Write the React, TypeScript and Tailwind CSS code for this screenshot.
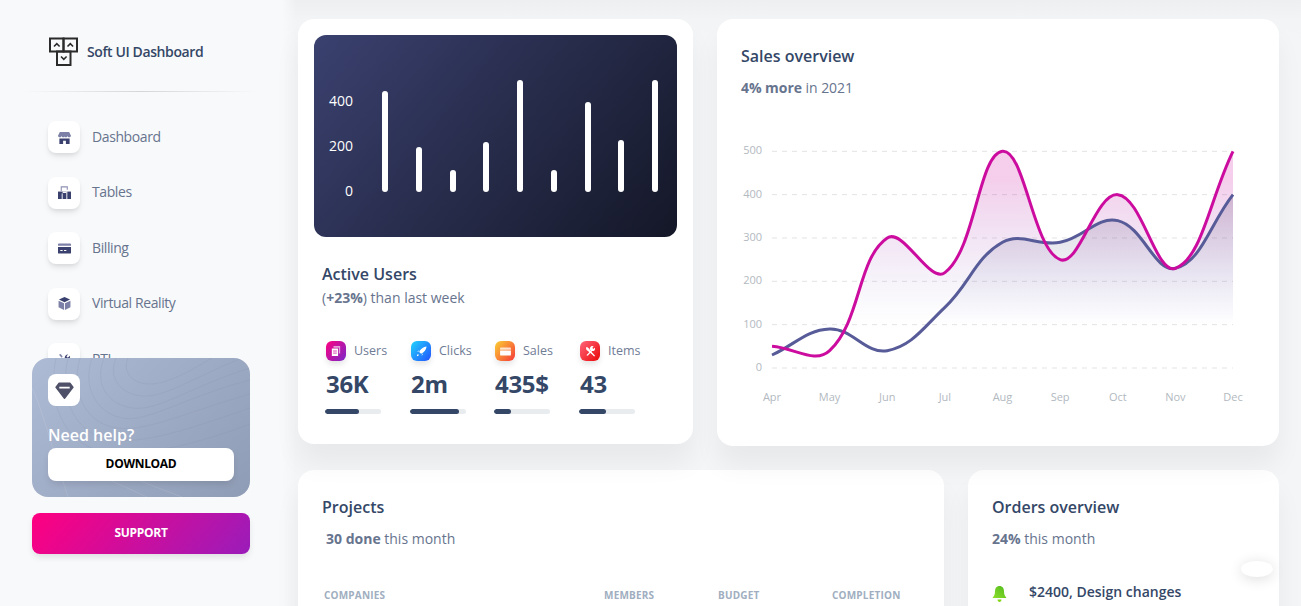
const F = "font-['Open_Sans',sans-serif]";

const xs = Array.from({ length: 9 }, (_, i) => 772 + i * 57.625);
const Y0 = 368;
const yFor = (v: number) => Y0 - v * 0.4334;
const months = ["Apr", "May", "Jun", "Jul", "Aug", "Sep", "Oct", "Nov", "Dec"];
const pink = [50, 40, 300, 220, 500, 250, 400, 230, 500];
const blue = [30, 90, 40, 140, 290, 290, 340, 230, 400];

function spline(vals: number[]) {
  const p = vals.map((v, i) => [xs[i], yFor(v)]);
  const t = 0.4;
  const cps = p.map((c, i) => {
    const a = p[Math.max(i - 1, 0)];
    const b = p[Math.min(i + 1, p.length - 1)];
    const d1 = Math.hypot(c[0] - a[0], c[1] - a[1]);
    const d2 = Math.hypot(b[0] - c[0], b[1] - c[1]);
    const s = d1 + d2 || 1;
    const fa = (t * d1) / s;
    const fb = (t * d2) / s;
    return {
      px: c[0] - fa * (b[0] - a[0]),
      py: c[1] - fa * (b[1] - a[1]),
      nx: c[0] + fb * (b[0] - a[0]),
      ny: c[1] + fb * (b[1] - a[1]),
    };
  });
  let d = `M${p[0][0]} ${p[0][1]}`;
  for (let i = 1; i < p.length; i++) {
    d += ` C${cps[i - 1].nx} ${cps[i - 1].ny} ${cps[i].px} ${cps[i].py} ${p[i][0]} ${p[i][1]}`;
  }
  return d;
}

function SalesChart() {
  const pd = spline(pink);
  const bd = spline(blue);
  const close = ` L${xs[8]} ${Y0} L${xs[0]} ${Y0} Z`;
  return (
    <svg viewBox="717 120 562 300" className="block w-full h-[300px]">
      <defs>
        <linearGradient id="gp" gradientUnits="userSpaceOnUse" x1="0" y1="180" x2="0" y2="360">
          <stop offset="0" stopColor="#cb0c9f" stopOpacity="0.2" />
          <stop offset="0.8" stopColor="#4848b0" stopOpacity="0" />
          <stop offset="1" stopColor="#cb0c9f" stopOpacity="0" />
        </linearGradient>
        <linearGradient id="gb" gradientUnits="userSpaceOnUse" x1="0" y1="180" x2="0" y2="360">
          <stop offset="0" stopColor="#141727" stopOpacity="0.2" />
          <stop offset="0.8" stopColor="#4848b0" stopOpacity="0" />
          <stop offset="1" stopColor="#141727" stopOpacity="0" />
        </linearGradient>
      </defs>
      {[0, 100, 200, 300, 400, 500].map((v) => (
        <g key={v}>
          <line x1="772" x2="1233" y1={yFor(v)} y2={yFor(v)} stroke="#e3e3e3" strokeWidth="1" strokeDasharray="5 5" />
          <text x="762" y={yFor(v) + 3} textAnchor="end" fontSize="11" fill="#b2b9bf" fontFamily="Open Sans, sans-serif">{v}</text>
        </g>
      ))}
      {months.map((m, i) => (
        <text key={m} x={xs[i]} y="401" textAnchor="middle" fontSize="11" fill="#b2b9bf" fontFamily="Open Sans, sans-serif">{m}</text>
      ))}
      <path d={bd + close} fill="url(#gb)" />
      <path d={pd + close} fill="url(#gp)" />
      <path d={bd} fill="none" stroke="#575b98" strokeWidth="3" />
      <path d={pd} fill="none" stroke="#cb0c9f" strokeWidth="3" />
    </svg>
  );
}

const bars = [101, 45, 22, 50, 112, 22, 90, 52, 112];

function ShopIcon() {
  return (
    <svg viewBox="0 0 14 14" className="w-[13px] h-[13px]">
      <path d="M2 1h10l2 4.200c0 1-.9 1.600-1.900 1.600S10.400 6.200 10.300 5.400c-.2.800-1.200 1.400-2 1.400-.8 0-1.100-.5-1.300-1-.2.500-.6 1-1.300 1-.8 0-1.800-.6-2-1.400C3.600 6.200 2.900 6.800 1.900 6.800S0 6.200 0 5.200z" fill="#7c7fa6" />
      <path d="M1.500 8h11v6H8.500v-3.500h-3V14h-4z" fill="#3a416f" />
    </svg>
  );
}
function TableIcon() {
  return (
    <svg viewBox="0 0 14 14" className="w-[13px] h-[13px]">
      <path d="M3.500 5.500V1h6.500v3" fill="none" stroke="#8e91b3" strokeWidth="1.200" />
      <path d="M0 6h14v8H0z" fill="#3a416f" />
      <path d="M4.500 8v6M9.500 5.500V14" stroke="#fff" strokeWidth="1" />
      <path d="M5 6h4v1.500H5z" fill="#fff" />
    </svg>
  );
}
function CardIcon() {
  return (
    <svg viewBox="0 0 14 14" className="w-[13px] h-[13px]">
      <path d="M0 2.500a1 1 0 0 1 1-1h12a1 1 0 0 1 1 1V4H0z" fill="#7c7fa6" />
      <path d="M0 5.500h14v6a1 1 0 0 1-1 1H1a1 1 0 0 1-1-1z" fill="#3a416f" />
      <path d="M2.500 8.500h2.500v1.200H2.500zM6.500 8.500h2.500v1.200H6.500z" fill="#fff" />
    </svg>
  );
}
function BoxIcon() {
  return (
    <svg viewBox="0 0 14 14" className="w-[13px] h-[13px]">
      <path d="M7 0l6 2.800L7 5.600 1 2.800z" fill="#3a416f" />
      <path d="M.6 4l5.900 2.700V14L.6 11z" fill="#7c7fa6" />
      <path d="M13.400 4L7.500 6.700V14l5.900-3z" fill="#7c7fa6" />
    </svg>
  );
}
function ToolIcon() {
  return (
    <svg viewBox="0 0 14 14" className="w-[13px] h-[13px]">
      <path d="M1 2l2-1 2 3-1 1zM6 8l-4 4 1 1 4-4z" fill="#7c7fa6" />
      <path d="M13 4a3.500 3.500 0 0 1-4.500 3.300L5 11l-1-1 3.500-3.800A3.500 3.500 0 0 1 11 1.500L9 3.500l1.500 1.500 2.300-2z" fill="#3a416f" />
    </svg>
  );
}

function NavItem({ icon, label }: { icon: React.ReactNode; label: string }) {
  return (
    <div className="flex items-center h-[32px] pl-[48px]">
      <div className="w-8 h-8 rounded-lg bg-white flex items-center justify-center shadow-[0_4px_6px_-1px_rgba(0,0,0,0.1),0_2px_4px_-1px_rgba(0,0,0,0.06)]">
        {icon}
      </div>
      <span className="ml-[12px] pb-[2px] text-[14px] text-[#67748e] tracking-[-0.4px]">{label}</span>
    </div>
  );
}

function Logo() {
  return (
    <svg viewBox="0 0 30 30" className="w-[30px] h-[30px]" fill="none" stroke="#2b2b2b">
      <rect x="1" y="1.500" width="13.500" height="13" strokeWidth="2" />
      <rect x="14.500" y="1.500" width="13.500" height="13" strokeWidth="2" />
      <rect x="8" y="14.500" width="13.500" height="13.500" strokeWidth="2" />
      <path d="M5 9.500l2.800-2.800 2.800 2.800M18.500 9.500l2.800-2.800 2.800 2.800M12 19.500l2.800 2.800 2.800-2.800" strokeWidth="1.600" />
    </svg>
  );
}

function Stat({ color, icon, label, value, pct, w }: { color: string; icon: React.ReactNode; label: string; value: string; pct: number; w: string }) {
  return (
    <div className={w}>
      <div className="flex items-center pl-px">
        <div className={`w-5 h-5 rounded-[6px] flex items-center justify-center shadow-[0_4px_6px_-1px_rgba(0,0,0,0.12)] ${color}`}>{icon}</div>
        <span className="ml-[8px] text-[12.500px] font-medium text-[#6f7c95]">{label}</span>
      </div>
      <div className="mt-[6px] text-[24px] leading-[33px] font-bold text-[#344767] pl-px tracking-[-0.3px]">{value}</div>
      <div className="mt-[9px] h-[5px] w-[56px] rounded-full bg-[#e9ecef] overflow-hidden">
        <div className="h-full rounded-full bg-[#344767]" style={{ width: `${pct}%` }} />
      </div>
    </div>
  );
}

export default function App() {
  return (
    <div className={`${F} w-[1301px] h-[606px] overflow-hidden bg-[#f8f9fa] flex`}>
      <aside className="w-[282px] shrink-0 h-[606px] flex flex-col">
        <div className="flex items-center h-[91px] pt-[12px] pl-[49px]">
          <Logo />
          <span className="ml-[8px] text-[14px] font-semibold text-[#344767] tracking-[-0.4px]">Soft UI Dashboard</span>
        </div>
        <div className="mx-[24px] w-[234px] h-px bg-[linear-gradient(90deg,transparent,rgba(0,0,0,0.14),transparent)]" />
        <nav className="h-[266px] overflow-hidden pt-[29px] flex flex-col gap-[23.500px]">
          <NavItem icon={<ShopIcon />} label="Dashboard" />
          <NavItem icon={<TableIcon />} label="Tables" />
          <NavItem icon={<CardIcon />} label="Billing" />
          <NavItem icon={<BoxIcon />} label="Virtual Reality" />
          <NavItem icon={<ToolIcon />} label="RTL" />
        </nav>
        <div className="mx-[32px] w-[218px] h-[139px] rounded-2xl px-4 pt-4 bg-[linear-gradient(135deg,#aebbd5,#8f9cb5)] relative overflow-hidden">
          <svg className="absolute inset-0 w-full h-full" viewBox="0 0 218 139" fill="none" stroke="#8492ad" strokeOpacity="0.18">
            <path d="M60 0C50 30 65 55 90 60S150 40 218 22" />
            <path d="M72 0C62 26 75 46 100 50S160 28 218 10" />
            <path d="M84 0C76 20 88 36 110 38S165 18 210 0" />
            <path d="M48 0C38 36 55 66 85 70S155 54 218 36" />
            <path d="M36 0C26 44 46 78 80 82S160 70 218 50" />
            <path d="M24 0C14 50 36 90 76 94S165 86 218 66" />
            <path d="M96 0C90 14 100 26 118 26S160 12 180 0" />
            <path d="M0 30C10 50 20 90 36 139" stroke="#ffffff" strokeOpacity="0.1" />
            <path d="M60 105C90 115 120 128 150 139" stroke="#ffffff" strokeOpacity="0.1" />
            <path d="M50 112C75 120 95 130 115 139" stroke="#ffffff" strokeOpacity="0.1" />
          </svg>
          <div className="relative w-8 h-8 rounded-lg bg-white flex items-center justify-center">
            <svg viewBox="0 0 20 18" className="w-[19px] h-[17px]">
              <path d="M4.500 0.500h11a1 1 0 0 1 .8.400l3.200 4a1 1 0 0 1 0 1.200L10.800 17.500a1 1 0 0 1-1.600 0L.5 6.100a1 1 0 0 1 0-1.200l3.200-4a1 1 0 0 1 .8-.4z" fill="#4f5169" />
              <path d="M4.500 6h11" stroke="#fff" strokeWidth="2" />
            </svg>
          </div>
          <div className="relative mt-[18px] text-[16px] leading-[22px] font-semibold text-white">Need help?</div>
          <div className="relative mt-[2px] h-[33px] pb-[2px] rounded-lg bg-white flex items-center justify-center text-[12px] font-bold text-black tracking-[-0.3px] shadow-[0_4px_7px_-1px_rgba(0,0,0,0.11)]">DOWNLOAD</div>
        </div>
        <div className="mx-[32px] mt-4 w-[218px] h-[41px] pb-[2px] rounded-lg bg-[linear-gradient(310deg,#9a1cba,#ff0080)] flex items-center justify-center text-[12px] font-bold text-white tracking-[-0.3px] shadow-[0_4px_7px_-1px_rgba(0,0,0,0.11)]">SUPPORT</div>
      </aside>

      <main className="w-[1019px] pl-[16px] pt-[19px] bg-[linear-gradient(90deg,#f8f9fa,transparent_14px),linear-gradient(180deg,#eeeff0_0,#f3f4f6_20px,transparent_44px),linear-gradient(90deg,#f4f5f7,#f4f5f7)]">
        <div className="relative z-10 flex gap-[24px] w-[981px] items-start">
          <section className="w-[395px] h-[425px] rounded-2xl bg-white p-4 shadow-[0_20px_27px_0_rgba(0,0,0,0.05)]">
            <div className="h-[202px] rounded-xl bg-[linear-gradient(310deg,#141727,#3a416f)] flex items-start pl-[15px] pr-[19px]">
              <div className="mt-[56px] w-[24px] h-[110px] flex flex-col justify-between items-end text-[14px] leading-[20px] text-white">
                <span>400</span>
                <span>200</span>
                <span>0</span>
              </div>
              <div className="flex-1 ml-[29px] mt-[45px] h-[112px] flex justify-between items-end">
                {bars.map((h, i) => (
                  <div key={i} className="w-[6px] bg-white rounded-[3px]" style={{ height: h }} />
                ))}
              </div>
            </div>
            <div className="pl-2 mt-[25px]">
              <div className="text-[16px] leading-[24px] font-semibold text-[#344767]">Active Users</div>
              <div className="text-[14px] leading-[24px] text-[#67748e]">(<b className="font-bold">+23%</b>) than last week</div>
            </div>
            <div className="flex mt-[31px] pl-[11px]">
              <Stat w="w-[85px]" pct={60} label="Users" value="36K" color="bg-[linear-gradient(310deg,#7928ca,#ff0080)]" icon={
                <svg viewBox="0 0 12 12" className="w-2.5 h-2.5"><path d="M3 0h8v9H9.500V2H3z" fill="#fff" opacity=".6" /><path d="M1 3h7.500v9H1z" fill="#fff" /><path d="M2.500 6h4.500M2.500 8.500h4.500" stroke="#d11aa0" /></svg>
              } />
              <Stat w="w-[84px]" pct={88} label="Clicks" value="2m" color="bg-[linear-gradient(310deg,#2152ff,#21d4fd)]" icon={
                <svg viewBox="0 0 12 12" className="w-[11px] h-[11px]"><path d="M11.500.5C8 .8 5 3 3.500 6.500l2 2C9 7 11.200 4 11.500.5z" fill="#fff" /><path d="M1 6.500l2-1.500 1 .5zM6 11l1.500-2-.5-1zM1 11c0-1.500.5-2 1.500-2 .5.500.5 1 .5 1-.5.500-1 1-2 1z" fill="#fff" /></svg>
              } />
              <Stat w="w-[85px]" pct={30} label="Sales" value="435$" color="bg-[linear-gradient(310deg,#f53939,#fbcf33)]" icon={
                <svg viewBox="0 0 12 10" className="w-[11px] h-[9px]"><path d="M0 1.500a1 1 0 0 1 1-1h10a1 1 0 0 1 1 1V3H0z" fill="#fff" opacity=".75" /><path d="M0 4h12v4.500a1 1 0 0 1-1 1H1a1 1 0 0 1-1-1z" fill="#fff" /></svg>
              } />
              <Stat w="w-[85px]" pct={48} label="Items" value="43" color="bg-[linear-gradient(310deg,#ea0606,#ff667c)]" icon={
                <svg viewBox="0 0 12 12" className="w-[11px] h-[11px]"><path d="M2 1l1.500 1 5 6 2.500 2.500-1 1L7.500 9l-6-5L1 2z" fill="#fff" /><path d="M11 3a2.500 2.500 0 0 1-3.300 2.400L3 10.500 1.500 10l5-5A2.500 2.500 0 0 1 9.500.6L8 2l1 1.200L10.500 2z" fill="#fff" /></svg>
              } />
            </div>
          </section>
          <section className="w-[562px] h-[427px] rounded-2xl bg-white shadow-[0_20px_27px_0_rgba(0,0,0,0.05)]">
            <div className="px-6 pt-[24px] h-[101px]">
              <div className="text-[16px] leading-[26px] font-semibold text-[#344767]">Sales overview</div>
              <div className="mt-[9px] text-[14px] leading-[20px] text-[#67748e] tracking-[-0.05px]"><b className="font-bold">4% more</b> in 2021</div>
            </div>
            <SalesChart />
          </section>
        </div>

        <div className="flex gap-[24px] w-[981px] mt-[24px] items-start">
          <section className="w-[646px] h-[200px] rounded-2xl bg-white shadow-[0_20px_27px_0_rgba(0,0,0,0.05)] px-6 pt-[24px]">
            <div className="text-[16px] leading-[26px] font-semibold text-[#344767]">Projects</div>
            <div className="mt-[9px] pl-[4px] text-[14px] leading-[20px] text-[#67748e]"><b className="font-bold">30 done</b> this month</div>
            <div className="mt-[39px] flex text-[10px] font-bold text-[#a0aec0] tracking-[0.2px] pl-[2px]">
              <span className="w-[280px]">COMPANIES</span>
              <span className="w-[114px]">MEMBERS</span>
              <span className="w-[114px]">BUDGET</span>
              <span>COMPLETION</span>
            </div>
          </section>
          <section className="w-[311px] h-[200px] rounded-2xl bg-white shadow-[0_20px_27px_0_rgba(0,0,0,0.05)] px-6 pt-[24px] relative">
            <div className="text-[16px] leading-[26px] font-semibold text-[#344767]">Orders overview</div>
            <div className="mt-[9px] text-[14px] leading-[20px] text-[#67748e]"><b className="font-bold">24%</b> this month</div>
            <div className="flex mt-[32px] items-center">
              <svg viewBox="0 0 14 16" className="w-[15px] h-[16px] mt-[4px]">
                <defs>
                  <linearGradient id="bell" x1="1" y1="0" x2="0" y2="1">
                    <stop offset="0" stopColor="#4fb81f" />
                    <stop offset="1" stopColor="#8fe02a" />
                  </linearGradient>
                </defs>
                <path d="M7 0c3 0 4.500 2.300 4.500 5.500 0 3 1 4.500 2.500 6.500H0c1.500-2 2.500-3.500 2.500-6.500C2.500 2.300 4 0 7 0z" fill="url(#bell)" />
                <path d="M5 13.500h4c0 1.200-1 2.500-2 2.500S5 14.700 5 13.500z" fill="#82d616" />
              </svg>
              <span className="ml-[22px] text-[14px] font-semibold text-[#344767]">$2400, Design changes</span>
            </div>
            <div className="absolute left-[273px] top-[91px] w-[32px] h-[16px] rounded-[50%] bg-white shadow-[0_2px_14px_rgba(0,0,0,0.14)]" />
          </section>
        </div>
      </main>
    </div>
  );
}
